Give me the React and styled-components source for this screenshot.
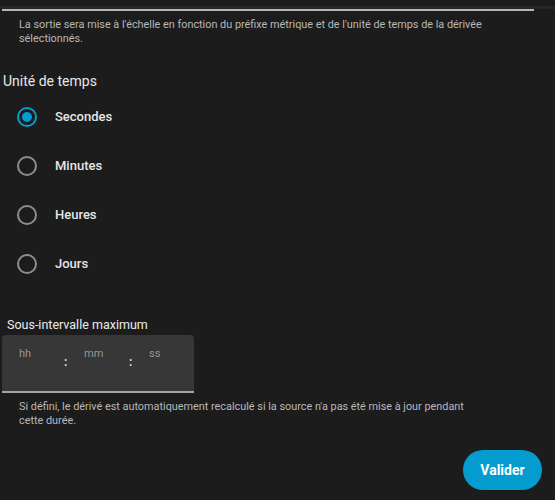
import React, { useState } from 'react'
import styled, { createGlobalStyle } from 'styled-components'

const GlobalStyle = createGlobalStyle`
  body {
    margin: 0;
    background: #1c1c1c;
    font-family: Roboto, "Noto Sans", sans-serif;
    color: #e1e1e1;
  }
`

const Page = styled.div`
  width: 555px;
  height: 500px;
  display: flex;
  flex-direction: column;
  overflow: hidden;
`

const TopBand = styled.div`
  height: 3px;
  margin-top: 6px;
  background: #262626;
`

const TopLine = styled.div`
  height: 2px;
  margin: 0 21px 0 2px;
  background: #b4b4b4;
`

const Helper = styled.p`
  margin: ${({ $mt }) => $mt || '0'} 72px 0 19px;
  font-size: 10.85px;
  line-height: 14px;
  color: #b8b8b8;
`

const Heading = styled.h3`
  margin: 25px 0 0 3px;
  font-size: 14px;
  font-weight: 400;
  line-height: 20px;
  color: #e8e8e8;
`

const RadioList = styled.div`
  display: flex;
  flex-direction: column;
  margin-top: 1px;
`

const RadioRow = styled.label`
  display: flex;
  align-items: center;
  height: 49px;
  padding-left: 17px;
  cursor: pointer;
`

const Circle = styled.span`
  width: 16px;
  height: 16px;
  border-radius: 50%;
  border: 2px solid ${({ $on }) => ($on ? '#049ccf' : '#8e8e8e')};
  display: flex;
  align-items: center;
  justify-content: center;

  &::after {
    content: '';
    width: 10px;
    height: 10px;
    border-radius: 50%;
    background: ${({ $on }) => ($on ? '#049ccf' : 'transparent')};
  }
`

const RadioText = styled.span`
  margin-left: 18px;
  font-size: 13px;
  font-weight: 500;
  color: #e6e6e6;
`

const FieldTitle = styled.div`
  margin: 29px 0 0 7px;
  font-size: 12.5px;
  line-height: 16px;
  color: #ececec;
`

const TimeBox = styled.div`
  margin: 2px 0 0 2px;
  width: 192px;
  height: 56px;
  display: flex;
  background: #373737;
  border-radius: 4px 4px 0 0;
  border-bottom: 2px solid #a4a4a4;
`

const TimeField = styled.div`
  width: 63px;
  padding: 12px 0 0 17px;
  box-sizing: border-box;
  font-size: 11px;
  color: #969696;
`

const Colon = styled.span`
  width: 3px;
  padding-top: 20px;
  font-size: 12px;
  font-weight: 700;
  color: #d8d8d8;
  text-align: center;
`

const Footer = styled.div`
  display: flex;
  justify-content: flex-end;
  margin-top: 22px;
  padding-right: 13px;
`

const Button = styled.button`
  width: 79px;
  height: 40px;
  border: none;
  border-radius: 20px;
  background: #049ccf;
  color: #ffffff;
  font-family: Roboto, sans-serif;
  font-size: 14px;
  font-weight: 700;
  cursor: pointer;
`

const units = ['Secondes', 'Minutes', 'Heures', 'Jours']

export default function App() {
  const [unit, setUnit] = useState('Secondes')

  return (
    <Page>
      <GlobalStyle />
      <TopBand />
      <TopLine />
      <Helper $mt="7px">
        La sortie sera mise à l'échelle en fonction du préfixe métrique et de l'unité de temps de la dérivée sélectionnés.
      </Helper>

      <Heading>Unité de temps</Heading>
      <RadioList>
        {units.map((u) => (
          <RadioRow key={u} onClick={() => setUnit(u)}>
            <Circle $on={unit === u} />
            <RadioText>{u}</RadioText>
          </RadioRow>
        ))}
      </RadioList>

      <FieldTitle>Sous-intervalle maximum</FieldTitle>
      <TimeBox>
        <TimeField>hh</TimeField>
        <Colon>:</Colon>
        <TimeField>mm</TimeField>
        <Colon>:</Colon>
        <TimeField>ss</TimeField>
      </TimeBox>
      <Helper $mt="7px">
        Si défini, le dérivé est automatiquement recalculé si la source n'a pas été mise à jour pendant cette durée.
      </Helper>

      <Footer>
        <Button type="button">Valider</Button>
      </Footer>
    </Page>
  )
}
